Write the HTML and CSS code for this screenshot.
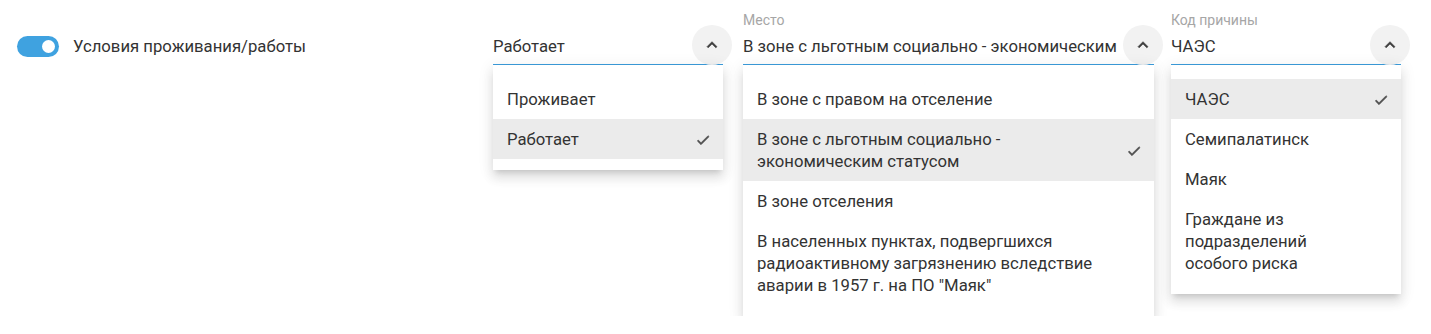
FILE: index.html
```html
<!DOCTYPE html>
<html lang="ru">
<head>
  <meta charset="UTF-8" />
  <title>Условия проживания/работы</title>
  <link rel="stylesheet" href="styles.css">
</head>
<body>

  <div class="row">
    <!-- Switch -->
    <div class="switch-col">
      <span class="switch"><span class="knob"></span></span>
      <span class="switch-label">Условия проживания/работы</span>
    </div>

    <!-- Проживает / Работает -->
    <div class="field field-small">
      <div class="field-label"></div>
      <div class="field-input">
        <span class="value">Работает</span>
        <span class="append">
          <svg viewBox="0 0 24 24" width="20" height="20"><path d="M7.41,15.41L12,10.83L16.59,15.41L18,14L12,8L6,14L7.41,15.41Z"/></svg>
        </span>
      </div>
      <div class="menu">
        <div class="item"><span class="text">Проживает</span><span class="check"></span></div>
        <div class="item active"><span class="text">Работает</span><span class="check"><svg viewBox="0 0 24 24" width="16" height="16"><path d="M21,7L9,19L3.5,13.5L4.91,12.09L9,16.17L19.59,5.59L21,7Z"/></svg></span></div>
      </div>
    </div>

    <!-- Место -->
    <div class="field field-wide">
      <div class="field-label">Место</div>
      <div class="field-input">
        <span class="value">В зоне с льготным социально - экономическим статусом</span>
        <span class="append">
          <svg viewBox="0 0 24 24" width="20" height="20"><path d="M7.41,15.41L12,10.83L16.59,15.41L18,14L12,8L6,14L7.41,15.41Z"/></svg>
        </span>
      </div>
      <div class="menu">
        <div class="item"><span class="text">В зоне с правом на отселение</span><span class="check"></span></div>
        <div class="item active"><span class="text">В зоне с льготным социально - экономическим статусом</span><span class="check"><svg viewBox="0 0 24 24" width="16" height="16"><path d="M21,7L9,19L3.5,13.5L4.91,12.09L9,16.17L19.59,5.59L21,7Z"/></svg></span></div>
        <div class="item"><span class="text">В зоне отселения</span><span class="check"></span></div>
        <div class="item"><span class="text">В населенных пунктах, подвергшихся радиоактивному загрязнению вследствие аварии в 1957 г. на ПО "Маяк"</span><span class="check"></span></div>
      </div>
    </div>

    <!-- Код причины -->
    <div class="field field-small">
      <div class="field-label">Код причины</div>
      <div class="field-input">
        <span class="value">ЧАЭС</span>
        <span class="append">
          <svg viewBox="0 0 24 24" width="20" height="20"><path d="M7.41,15.41L12,10.83L16.59,15.41L18,14L12,8L6,14L7.41,15.41Z"/></svg>
        </span>
      </div>
      <div class="menu">
        <div class="item active"><span class="text">ЧАЭС</span><span class="check"><svg viewBox="0 0 24 24" width="16" height="16"><path d="M21,7L9,19L3.5,13.5L4.91,12.09L9,16.17L19.59,5.59L21,7Z"/></svg></span></div>
        <div class="item"><span class="text">Семипалатинск</span><span class="check"></span></div>
        <div class="item"><span class="text">Маяк</span><span class="check"></span></div>
        <div class="item"><span class="text">Граждане из подразделений особого риска</span><span class="check"></span></div>
      </div>
    </div>
  </div>

</body>
</html>
```

FILE: styles.css
```css
body {
  font-family: Roboto, "Noto Sans", Arial, sans-serif;
  margin: 0;
  background-color: #fff;
  color: #333;
}

.row {
  display: flex;
  align-items: flex-start;
  padding-left: 17px;
}

/* switch */
.switch-col {
  width: 476px;
  display: flex;
  align-items: center;
  padding-top: 36px;
}

.switch {
  position: relative;
  width: 42px;
  height: 21px;
  border-radius: 11px;
  background-color: #3fa2e0;
}

.knob {
  position: absolute;
  top: 4px;
  right: 4px;
  width: 13px;
  height: 13px;
  border-radius: 50%;
  background-color: #fff;
}

.switch-label {
  margin-left: 14px;
  font-size: 16.7px;
  line-height: 21px;
}

/* select fields */
.field {
  display: flex;
  flex-direction: column;
  padding-top: 10px;
  margin-right: 20px;
}

.field-small {
  width: 230px;
}

.field-wide {
  width: 411px;
  margin-right: 17px;
}

.field-label {
  height: 20px;
  font-size: 14px;
  line-height: 20px;
  color: #a6a6a6;
}

.field-input {
  display: flex;
  align-items: center;
  height: 24px;
  padding: 5px 0 5px;
  border-bottom: 2px solid #3c9ddc;
  font-size: 16.7px;
  line-height: 24px;
}

.value {
  flex: 1;
  min-width: 0;
  overflow: hidden;
  white-space: nowrap;
  margin-right: 14px;
}

.append {
  position: relative;
  width: 24px;
  height: 24px;
  margin-right: -1px;
  margin-top: -4px;
  display: flex;
  align-items: center;
  justify-content: center;
}

.append::before {
  content: "";
  position: absolute;
  left: -8px;
  top: -8px;
  width: 40px;
  height: 40px;
  border-radius: 50%;
  background-color: #f2f2f2;
}

.append svg {
  position: relative;
  fill: #3d3d3d;
  stroke: #3d3d3d;
  stroke-width: 0.7;
}

/* dropdown menus */
.menu {
  position: relative;
  margin-top: -1px;
  padding: 14px 0 11px;
  background: #fff;
  box-shadow: 0 5px 5px -3px rgba(0,0,0,0.12), 0 8px 10px 1px rgba(0,0,0,0.08), 0 3px 14px 2px rgba(0,0,0,0.07);
}

.item {
  display: flex;
  align-items: center;
  min-height: 40px;
  padding: 10px 12px 8px 14px;
  box-sizing: border-box;
  font-size: 16.7px;
  line-height: 22px;
}

.item.active {
  background-color: #ebebeb;
}

.item .text {
  flex: 1;
}

.check {
  width: 16px;
  height: 16px;
  margin-left: 32px;
  flex-shrink: 0;
}

.check svg {
  display: block;
  fill: #505050;
  stroke: #505050;
  stroke-width: 1;
}
```
